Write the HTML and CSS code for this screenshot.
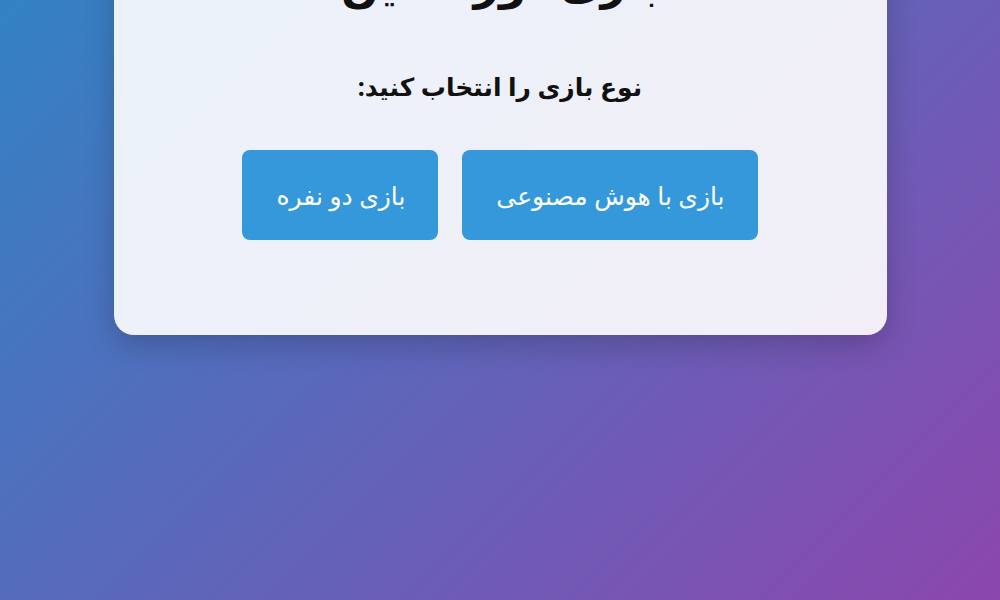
FILE: index.html
```html
<!DOCTYPE html>
<html lang="fa" dir="rtl">
<head>
<meta charset="utf-8">
<title>بازی دوز</title>
<link rel="stylesheet" href="styles.css">
</head>
<body>
  <main class="page">
    <section class="card">
      <h1 class="title">بازی دوز آنلاین</h1>
      <h2 class="subtitle">نوع بازی را انتخاب کنید:</h2>
      <div class="modes">
        <button class="mode-btn" type="button">بازی با هوش مصنوعی</button>
        <button class="mode-btn" type="button">بازی دو نفره</button>
      </div>
    </section>
  </main>
</body>
</html>
```

FILE: styles.css
```css
* {
  box-sizing: border-box;
}

html {
  height: 100%;
  background: linear-gradient(135deg, #3382c4 0%, #8c47ae 100%);
}

body {
  margin: 0;
  min-height: 100%;
  font-family: "Noto Sans", "DejaVu Sans", sans-serif;
  color: #111;
  overflow: hidden;
}

.page {
  display: flex;
  justify-content: center;
}

.card {
  width: 773px;
  margin-top: -88px;
  padding: 40px 36px 95px;
  background: rgba(255, 255, 255, 0.9);
  border-radius: 20px;
  box-shadow: 0 10px 30px rgba(0, 0, 0, 0.2);
  text-align: center;
}

.title {
  margin: 0 0 56px;
  font-size: 44px;
  line-height: 60px;
  font-weight: 700;
}

.subtitle {
  margin: 0 0 46px;
  font-size: 25px;
  line-height: 36px;
  font-weight: 700;
}

.modes {
  display: flex;
  justify-content: center;
  gap: 24px;
}

.mode-btn {
  height: 90px;
  padding: 0 33px 0 34px;
  border: none;
  border-radius: 8px;
  background: #3498db;
  color: #fff;
  font-family: inherit;
  font-size: 25px;
  cursor: pointer;
}
```
